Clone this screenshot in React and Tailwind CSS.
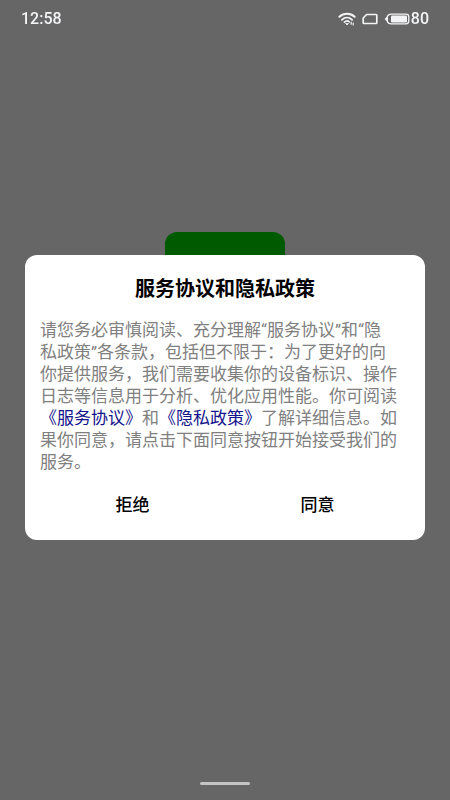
import React, { useState } from 'react';

function WifiIcon() {
  return (
    <svg viewBox="0 0 18 14" className="h-[14px] w-[18px]" fill="none" stroke="currentColor" strokeWidth="2" strokeLinecap="round" aria-hidden="true">
      <path d="M1.4 4.8C5.6 0.8 12.4 0.8 16.6 4.8" />
      <path d="M3.9 7.8C6.9 5 11.1 5 14.1 7.8" strokeWidth="1.8" />
      <path d="M6.4 10.2C7.9 8.8 10.1 8.8 11.4 10" strokeWidth="1.6" />
      <path d="M7.8 11.8L9 13L10.2 11.8Z" fill="currentColor" strokeWidth="0.8" />
      <path d="M13.2 10.2V12.2M15.2 11V13" strokeWidth="1.2" />
    </svg>
  );
}

function SimIcon() {
  return (
    <svg viewBox="0 0 16 12" className="h-3 w-4" fill="none" stroke="currentColor" strokeWidth="1.7" strokeLinejoin="round" aria-hidden="true">
      <path d="M4.6 1.5H14Q14.8 1.5 14.8 2.3V9.7Q14.8 10.5 14 10.5H2Q1.2 10.5 1.2 9.7V5Z" />
    </svg>
  );
}

function BatteryIcon() {
  return (
    <svg viewBox="0 0 26 12" className="h-3 w-[26px]" fill="none" stroke="currentColor" strokeWidth="1.3" aria-hidden="true">
      <path d="M7 1.2H22Q24.8 1.2 24.8 4V8Q24.8 10.8 22 10.8H7Q4.6 10.8 3.4 8.8V3.2Q4.6 1.2 7 1.2Z" />
      <path d="M3.4 3.6L0.8 6L3.4 8.4Z" fill="currentColor" strokeWidth="0.6" />
      <rect x="7" y="2.6" width="16" height="6.8" rx="1.2" fill="currentColor" stroke="none" />
    </svg>
  );
}

function StatusBar() {
  return (
    <header className="relative z-20 flex h-[38px] items-center justify-between px-[21px] text-[16px] leading-none font-medium text-gray-100">
      <time>12:58</time>
      <div className="flex items-center gap-[6px]">
        <WifiIcon />
        <SimIcon />
        <div className="flex items-center gap-px">
          <BatteryIcon />
          <span>80</span>
        </div>
      </div>
    </header>
  );
}

function PolicyDialog({ onClose }) {
  return (
    <div
      role="dialog"
      aria-modal="true"
      aria-labelledby="policy-title"
      className="w-full rounded-xl bg-white px-[15px] pt-[21px] pb-[15px]"
    >
      <h1 id="policy-title" className="text-center text-[20px] leading-[26px] font-bold text-black">
        服务协议和隐私政策
      </h1>
      <p className="mt-[17px] pr-[13px] text-[17px] leading-[22px] text-[#808080]">
        请您务必审慎阅读、充分理解“服务协议”和“隐私政策”各条款，包括但不限于：为了更好的向你提供服务，我们需要收集你的设备标识、操作日志等信息用于分析、优化应用性能。你可阅读
        <a href="#service" className="text-[#14148c]">《服务协议》</a>
        和
        <a href="#privacy" className="text-[#14148c]">《隐私政策》</a>
        了解详细信息。如果你同意，请点击下面同意按钮开始接受我们的服务。
      </p>
      <div className="mt-3 grid grid-cols-2 text-[17px] leading-[22px] font-medium text-black">
        <button type="button" className="py-[9px]" onClick={onClose}>拒绝</button>
        <button type="button" className="py-[9px]" onClick={onClose}>同意</button>
      </div>
    </div>
  );
}

export default function App() {
  const [open, setOpen] = useState(true);

  return (
    <div className="flex min-h-screen flex-col bg-[#666666] font-[Roboto,'Noto_Sans_CJK_SC',sans-serif]" lang="zh-CN">
      <StatusBar />
      <main className="flex flex-1 flex-col items-center pt-[194px]">
        <div className="h-[120px] w-[120px] rounded-xl bg-[#005a00]" />
      </main>
      {open && (
        <div className="fixed inset-0 z-10 flex items-center px-[25px] pb-[5px]">
          <PolicyDialog onClose={() => setOpen(false)} />
        </div>
      )}
      <div className="mx-auto mb-[15px] h-[3px] w-[50px] rounded-full bg-[#c4c4c4]" />
    </div>
  );
}
